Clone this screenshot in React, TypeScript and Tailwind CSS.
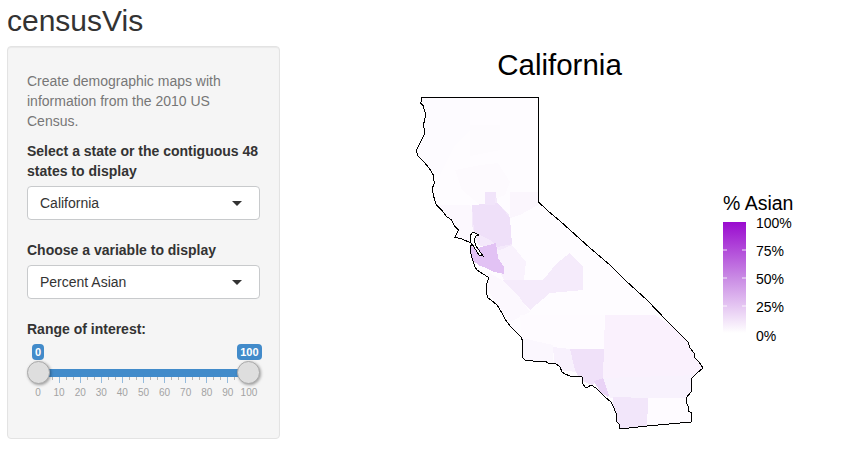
import { FC } from "react";

const outline =
  "422,97.5 538.5,97.5 538.5,183 539,190 538.5,202 548,211 560,221 570,230 590,248 610,265 625,280 647,300 668,322 688,342 690,348 694,353 695,358 699,362 703,368 697,373 692,378 691,385 691,392 686,398 686,402 688,406 688,411 692,413 691,422 647,426 620,429 619,424 617,422 616,413 613,406 611,402 605,397 600,392 596,388 591,385 588,387 585,387 583,384 582,377 576,376 570,376 565,374 562,372 560,367 555,363 548,363 545,361 540,362 533,361 525,360 522,357 523,352 522,347 523,342 521,337 516,332 510,326 505,319 502,313 497,305 491,300 488,298 486,292 486,287 488,280 488,277 483,274 477,270 475,267 472,258 470,250 470,247 472,244 479,255 483,256 476,246 474,240 476,236 479,235 473,232 470,236 471,243 462,239 455,237.3 458.3,230 455,226.7 451.7,220 446.7,216.7 441.7,210 436,204.3 433.3,195 432.3,188.3 434.3,183.3 433.3,175 429.3,168.3 425,163.3 420.7,159 417.3,155 416.7,150 420.7,141.7 424,135 424.7,130 423.3,125.7 425,118 426,115 424,109 423.3,105.7 420.7,103.3";

const counties: { fill: string; points: string }[] = [
  { fill: "#fdfbff", points: "415,95 470,95 470,130 455,145 440,175 425,170 410,150" },
  { fill: "#fdfbfe", points: "470,125 500,125 500,150 470,156" },
  { fill: "#fdfafe", points: "455,170 480,165 498,163 510,182 505,195 480,205 462,190" },
  { fill: "#fcf8fe", points: "440,205 470,205 478,225 470,245 452,240" },
  { fill: "#fbf6fd", points: "510,192 538,192 538,205 520,215 510,218" },
  { fill: "#f9f2fd", points: "497,245 512,245 526,262 524,280 505,282 498,268" },
  { fill: "#f5ebfb", points: "503,280 543,280 557,263 570,253 583,267 583,290 550,293 530,310 520,300" },
  { fill: "#f4e9fb", points: "485,192 496,192 497,203 509,215 512,245 500,250 478,245 472,225 472,205 485,205" },
  { fill: "#efe0f9", points: "472,205 498,203 510,218 512,244 498,247 490,240 474,232" },
  { fill: "#f1e4fa", points: "485,192 496,192 495,205 485,205" },
  { fill: "#e2c2f4", points: "470,246 478,248 496,243 498,258 504,267 504,274 494,272 486,268 480,266 472,260" },
  { fill: "#fcf8fe", points: "488,272 505,282 520,298 530,312 510,322 495,302 485,285" },
  { fill: "#fefbff", points: "520,315 604,315 604,348 570,349 553,348 522,340" },
  { fill: "#fbf7fe", points: "522,338 553,345 553,362 520,362" },
  { fill: "#f8f1fd", points: "553,347 570,349 577,372 555,370" },
  { fill: "#f0e1f9", points: "570,349 604,349 603,378 592,385 580,380 575,370" },
  { fill: "#e9d3f6", points: "594,381 603,378 611,392 608,397 600,392" },
  { fill: "#faf1fd", points: "605,315 655,315 700,345 705,375 603,378" },
  { fill: "#f8f2fd", points: "603,378 700,375 692,398 610,398" },
  { fill: "#f2e6fa", points: "613,397 648,398 647,432 615,432" },
  { fill: "#fefbff", points: "648,398 695,398 695,428 647,430" },
];

const legendTicks = [
  { y: 223, label: "100%" },
  { y: 251, label: "75%" },
  { y: 279, label: "50%" },
  { y: 307, label: "25%" },
  { y: 336, label: "0%" },
];

const SelectBox: FC<{ value: string }> = ({ value }) => (
  <div className="mt-[5px] flex h-[34px] items-center justify-between rounded border border-[#c8cacc] bg-white pl-[12px] pr-[17px] text-[14px] text-[#333]">
    <span>{value}</span>
    <span className="h-0 w-0 border-x-[5.5px] border-t-[5.5px] border-x-transparent border-t-[#333]" />
  </div>
);

const RangeSlider: FC = () => {
  const ticks = Array.from({ length: 31 }, (_, i) => i);
  const labels = Array.from({ length: 11 }, (_, i) => i * 10);

  return (
    <div className="relative mt-[5px] h-[56px]">
      <div className="flex justify-between">
        <span className="ml-[5px] rounded bg-[#428bca] px-[3px] text-[11px] leading-[16px] font-bold text-white">0</span>
        <span className="-mr-[2px] rounded bg-[#428bca] px-[3.5px] text-[11px] leading-[16px] font-bold text-white">100</span>
      </div>
      <div className="mx-[11px] mt-[9px] h-[8px] bg-[#428bca]" />
      <div className="mx-[11px] flex h-[7px] items-start justify-between">
        {ticks.map((t) => (
          <span
            key={t}
            className={t % 3 === 0 ? "h-[6px] w-px bg-[#94bbdd]" : "h-[3px] w-px bg-[#b5b5b5]"}
          />
        ))}
      </div>
      <div className="mx-[11px] mt-[2px] flex justify-between text-[10px] leading-[14px] text-[#a3a3a3]">
        {labels.map((l) => (
          <span key={l} className="flex w-0 justify-center">
            {l}
          </span>
        ))}
      </div>
      <span className="absolute top-[17px] left-0 h-[23px] w-[23px] rounded-full border border-[#aaa] bg-[#dedede] shadow-[1px_1px_3px_rgba(0,0,0,0.35)]" />
      <span className="absolute top-[17px] right-0 h-[23px] w-[23px] rounded-full border border-[#aaa] bg-[#dedede] shadow-[1px_1px_3px_rgba(0,0,0,0.35)]" />
    </div>
  );
};

const App: FC = () => {
  return (
    <div className="h-[451px] w-[862px] overflow-hidden bg-white font-['Liberation_Sans',Arial,sans-serif] text-[#333]">
      <h2 className="h-[46px] pl-[7px] pt-[4px] text-[30px] leading-[33px] font-normal">censusVis</h2>
      <div className="flex items-start">
        <div className="ml-[7px] h-[393px] w-[273px] rounded border border-[#e3e3e3] bg-[#f5f5f5] px-[19px] pt-[24px] shadow-[inset_0_1px_1px_rgba(0,0,0,0.05)]">
          <p className="text-[14px] leading-[20px] text-[#777]">
            Create demographic maps with information from the 2010 US Census.
          </p>
          <label className="mt-[10px] block text-[14px] leading-[20px] font-bold">
            Select a state or the contiguous 48 states to display
          </label>
          <SelectBox value="California" />
          <label className="mt-[20px] block text-[14px] leading-[20px] font-bold">
            Choose a variable to display
          </label>
          <SelectBox value="Percent Asian" />
          <label className="mt-[20px] block text-[14px] leading-[20px] font-bold">
            Range of interest:
          </label>
          <RangeSlider />
        </div>
        <svg
          viewBox="300 46 562 405"
          className="ml-[20px] h-[405px] w-[562px]"
          fontFamily="'Liberation Sans', Arial, sans-serif"
        >
          <defs>
            <clipPath id="state">
              <polygon points={outline} />
            </clipPath>
            <linearGradient id="legend" x1="0" y1="0" x2="0" y2="1">
              <stop offset="0" stopColor="#9a0bcf" />
              <stop offset="0.5" stopColor="#c98ae4" />
              <stop offset="1" stopColor="#ffffff" />
            </linearGradient>
          </defs>
          <text x="559.5" y="75" textAnchor="middle" fontSize="29.5" fill="#000">
            California
          </text>
          <polygon points={outline} fill="#fefcff" />
          <g clipPath="url(#state)" shapeRendering="crispEdges">
            {counties.map((c) => (
              <polygon key={c.points} points={c.points} fill={c.fill} />
            ))}
          </g>
          <polygon points={outline} fill="none" stroke="#000" strokeWidth="1" shapeRendering="crispEdges" />
          <text x="723" y="209.5" fontSize="19.5" fill="#000">
            % Asian
          </text>
          <rect x="723" y="222" width="23" height="111" fill="url(#legend)" />
          {[250, 278, 306].map((y) => (
            <g key={y} stroke="#fff" strokeWidth="1" opacity="0.85">
              <line x1="723" x2="727" y1={y} y2={y} />
              <line x1="742" x2="746" y1={y} y2={y} />
            </g>
          ))}
          {legendTicks.map((t) => (
            <text key={t.label} x="756" y={t.y + 5} fontSize="14" fill="#000">
              {t.label}
            </text>
          ))}
        </svg>
      </div>
    </div>
  );
};

export default App;
